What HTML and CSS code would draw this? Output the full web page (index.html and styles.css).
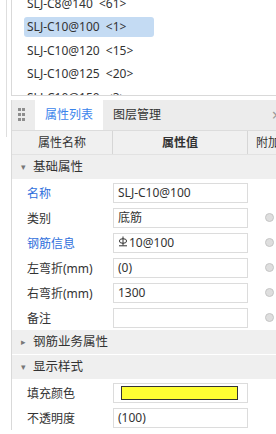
FILE: index.html
```html
<!DOCTYPE html>
<html lang="zh-CN">
<head>
  <meta charset="UTF-8" />
  <title>属性列表</title>
  <link rel="stylesheet" href="styles.css">
</head>
<body>
  <div class="list">
    <div class="list-inner">
      <div class="item"><span>SLJ-C8@140 &lt;61&gt;</span></div>
      <div class="item sel"><span>SLJ-C10@100 &lt;1&gt;</span></div>
      <div class="item"><span>SLJ-C10@120 &lt;15&gt;</span></div>
      <div class="item"><span>SLJ-C10@125 &lt;20&gt;</span></div>
      <div class="item"><span>SLJ-C10@150 &lt;3&gt;</span></div>
    </div>
  </div>

  <div class="panel">
    <div class="tabbar">
      <div class="handle"><i></i><i></i><i></i><i></i><i></i><i></i></div>
      <div class="tab active">属性列表</div>
      <div class="tab">图层管理</div>
      <div class="close">×</div>
    </div>

    <div class="row head">
      <div class="c1">属性名称</div>
      <div class="c2"><b>属性值</b></div>
      <div class="c3">附加</div>
    </div>

    <div class="group"><span class="tri">▾</span>基础属性</div>
    <div class="row">
      <div class="c1 link">名称</div>
      <div class="c2"><div class="box">SLJ-C10@100</div></div>
      <div class="c3"></div>
    </div>
    <div class="row">
      <div class="c1">类别</div>
      <div class="c2"><div class="box">底筋</div></div>
      <div class="c3"><span class="radio"></span></div>
    </div>
    <div class="row">
      <div class="c1 link">钢筋信息</div>
      <div class="c2"><div class="box"><svg class="grade" width="10" height="11" viewBox="0 0 10 11"><path d="M5 0.5V9.5M1 9.8H9" stroke="#333" stroke-width="1" fill="none"/><ellipse cx="5" cy="5" rx="3.6" ry="2.3" stroke="#333" stroke-width="1" fill="none"/></svg>10@100</div></div>
      <div class="c3"><span class="radio"></span></div>
    </div>
    <div class="row">
      <div class="c1">左弯折(mm)</div>
      <div class="c2"><div class="box">(0)</div></div>
      <div class="c3"><span class="radio"></span></div>
    </div>
    <div class="row">
      <div class="c1">右弯折(mm)</div>
      <div class="c2"><div class="box">1300</div></div>
      <div class="c3"><span class="radio"></span></div>
    </div>
    <div class="row">
      <div class="c1">备注</div>
      <div class="c2"><div class="box"></div></div>
      <div class="c3"><span class="radio"></span></div>
    </div>

    <div class="group"><span class="tri">▸</span>钢筋业务属性</div>
    <div class="group"><span class="tri">▾</span>显示样式</div>
    <div class="row">
      <div class="c1">填充颜色</div>
      <div class="c2"><div class="box"><span class="swatch"></span></div></div>
      <div class="c3"></div>
    </div>
    <div class="row">
      <div class="c1">不透明度</div>
      <div class="c2"><div class="box">(100)</div></div>
      <div class="c3"></div>
    </div>
  </div>
</body>
</html>
```

FILE: styles.css
```css
body {
  margin: 0;
  width: 276px;
  height: 434px;
  overflow: hidden;
  font-family: "Noto Sans", "Noto Sans CJK SC", sans-serif;
  font-size: 12px;
  color: #333;
  background: #fff linear-gradient(#dedede, #dedede) no-repeat 6px 0 / 1px 137px;
}

.list { margin-left: 11px; width: 300px; height: 95px; border-left: 1px solid #d9d9d9; border-bottom: 1px solid #d9d9d9; overflow: hidden; }
.list-inner { margin-top: -8px; }
.item { height: 23.5px; display: flex; align-items: center; padding-left: 12px; }
.item span { display: block; width: 127px; height: 20px; line-height: 20px; padding-left: 3px; border-radius: 3px; word-spacing: 3px; white-space: nowrap; }
.item.sel span { background: #c4dbf3; }

.panel { margin-top: 4px; margin-left: 11px; width: 264px; border-left: 1px solid #d9d9d9; }

.tabbar { height: 30px; display: flex; background: #ececec; border-bottom: 1px solid #dcdcdc; white-space: nowrap; }
.handle { flex: none; width: 7px; margin: 8px 10px 0 6px; display: grid; grid-template-columns: 3px 3px; gap: 2px 1px; align-content: start; }
.handle i { width: 3px; height: 3px; background: #8e8e8e; }
.tab { flex: none; padding: 0 10px; line-height: 30px; font-size: 12px; }
.tab.active { background: #fff; color: #3a84ec; }
.close { flex: none; margin-left: auto; margin-right: -5px; line-height: 30px; font-size: 16px; color: #999; }

.row { display: grid; grid-template-columns: 100px 136px 40px; height: 25px; align-items: center; }
.row .c1 { padding-left: 15px; white-space: nowrap; }
.row .c3 { display: flex; justify-content: flex-start; padding-left: 17px; }
.link { color: #2f6fdc; }

.head { height: 23px; background: #f0f0f0; border-bottom: 1px solid #e2e2e2; }
.head > div { height: 23px; line-height: 23px; text-align: center; }
.head .c1 { padding-left: 0; }
.head .c2 { border-left: 1px solid #d6d6d6; border-right: 1px solid #d6d6d6; }
.head .c3 { display: block; text-align: left; padding-left: 8px; white-space: nowrap; }

.group { height: 24px; line-height: 24px; background: #efefef; border-bottom: 1px solid #fff; padding-left: 9px; font-size: 12.5px; }
.tri { display: inline-block; width: 12px; font-size: 9px; color: #777; vertical-align: top; }

.box { height: 18px; line-height: 18px; margin-left: 1px; border: 1px solid #dcdcdc; padding-left: 4px; display: flex; align-items: center; }
.grade { margin: 0 1px 3px 0; }
.swatch { display: block; width: 115px; height: 12px; margin-left: 3px; background: #ffff33; border: 1px solid #333; }

.radio { width: 7px; height: 7px; border-radius: 50%; border: 1px solid #c6c6c6; background: #dedede; }
```
